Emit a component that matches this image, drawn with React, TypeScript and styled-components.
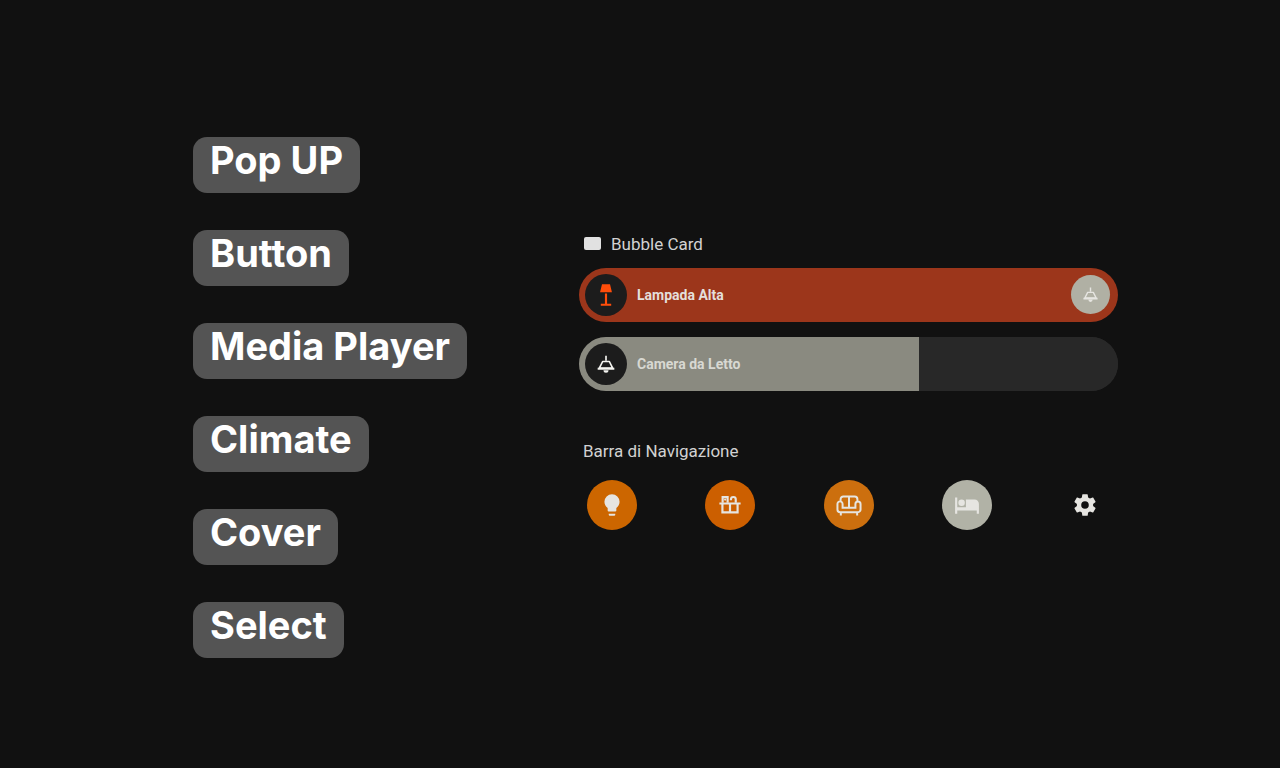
import React, { useState } from "react";
import styled, { createGlobalStyle } from "styled-components";

const GlobalStyle = createGlobalStyle`
  * { box-sizing: border-box; }
  body {
    margin: 0;
    background: #111111;
    color: #e1e1e1;
    font-family: Roboto, "Liberation Sans", sans-serif;
  }
`;

const Page = styled.main`
  min-height: 100vh;
  display: grid;
  grid-template-columns: 386px minmax(0, 1fr);
  align-items: center;
  padding: 0 162px 0 193px;
`;

const FeatureList = styled.nav`
  display: flex;
  flex-direction: column;
  align-items: flex-start;
  gap: 37px;
  padding-top: 27px;
`;

const Feature = styled.button`
  height: 56px;
  padding: 0 17px 10px;
  border: 0;
  border-radius: 14px;
  background: #545454;
  color: #ffffff;
  font: 700 38px/46px Inter, Roboto, sans-serif;
  white-space: nowrap;
  cursor: pointer;
`;

const Panel = styled.section`
  display: flex;
  flex-direction: column;
  padding-bottom: 5px;
`;

const Heading = styled.h2<{ $indent: number }>`
  display: flex;
  align-items: center;
  gap: 10px;
  margin: 0;
  padding-left: ${(p) => p.$indent}px;
  font-size: 17px;
  font-weight: 400;
  line-height: 20px;
  color: #d2d2d2;
`;

const CardGlyph = styled.span`
  width: 17px;
  height: 13px;
  border-radius: 2px;
  background: #e1e1e1;
`;

const Cards = styled.div`
  display: flex;
  flex-direction: column;
  gap: 15px;
  margin: 14px 0 50px;
`;

const Card = styled.div<{ $color: string }>`
  position: relative;
  display: flex;
  align-items: center;
  justify-content: space-between;
  height: 54px;
  padding: 0 8px 0 6px;
  border-radius: 27px;
  overflow: hidden;
  background: ${(p) => p.$color};
`;

const CardMain = styled.button`
  display: flex;
  flex: 1;
  align-items: center;
  gap: 10px;
  padding: 0;
  border: 0;
  background: none;
  color: #e4dfdb;
  font: 700 14px/20px Roboto, sans-serif;
  cursor: pointer;
`;

const SliderLabel = styled.label`
  position: relative;
  display: flex;
  align-items: center;
  gap: 10px;
  color: #d8d8d2;
  font: 700 14px/20px Roboto, sans-serif;
  pointer-events: none;
`;

const Slider = styled.input`
  position: absolute;
  inset: 0;
  width: 100%;
  height: 100%;
  margin: 0;
  appearance: none;
  cursor: pointer;

  &::-webkit-slider-thumb {
    appearance: none;
    width: 1px;
    height: 54px;
    background: transparent;
  }
`;

const IconDisc = styled.span<{ $color: string }>`
  display: grid;
  place-items: center;
  width: 42px;
  height: 42px;
  border-radius: 50%;
  background: #1c1c1c;
  color: ${(p) => p.$color};
`;

const RoundButton = styled.button<{ $size: number; $color: string }>`
  display: grid;
  place-items: center;
  width: ${(p) => p.$size}px;
  height: ${(p) => p.$size}px;
  padding: 0;
  border: 0;
  border-radius: 50%;
  background: ${(p) => p.$color};
  color: #e6e5e1;
  cursor: pointer;
`;

const NavBar = styled.nav`
  display: flex;
  justify-content: space-between;
  margin-top: 19px;
  padding: 0 8px;
`;

type IconProps = { size: number; children: React.ReactNode };

const Icon = ({ size, children }: IconProps) => (
  <svg width={size} height={size} viewBox="0 0 24 24" fill="currentColor" aria-hidden="true">
    {children}
  </svg>
);

const CeilingLight = ({ size }: { size: number }) => (
  <Icon size={size}>
    <path d="M11 2h2v6h-2z" />
    <path
      d="M8 9h8l4 8H4z"
      fill="none"
      stroke="currentColor"
      strokeWidth="2"
      strokeLinejoin="round"
    />
    <path d="M2 16.500h20v2.500H2zM9 19.500h6a3 3 0 0 1-6 0z" />
  </Icon>
);

const FloorLamp = () => (
  <Icon size={26}>
    <path d="M8.300 2h7.400l1.800 7.500h-11zM11 10.500h2v9.500h3.800v2H7.200v-2h3.800z" />
  </Icon>
);

const Bulb = () => (
  <Icon size={26}>
    <path d="M12 2A7 7 0 0 0 5 9C5 11.380 6.190 13.470 8 14.740V17A1 1 0 0 0 9 18H15A1 1 0 0 0 16 17V14.740C17.810 13.470 19 11.380 19 9A7 7 0 0 0 12 2M9 21A1 1 0 0 0 10 22H14A1 1 0 0 0 15 21V20H9V21Z" />
  </Icon>
);

const Kitchen = () => (
  <Icon size={26}>
    <g fill="none" stroke="currentColor" strokeWidth="2">
      <path d="M2.200 10.600h19.600M5 11v7.800h14V11M12 11v7.800" />
      <path d="M5.200 10V4.700h4.600V10" />
      <path d="M17.300 10V6.800a2.200 2.200 0 0 0-4.400 0v.7" />
    </g>
    <circle cx="7.500" cy="7" r="1" />
  </Icon>
);

const Sofa = () => (
  <Icon size={28}>
    <path
      d="M4.800 9V7a2.300 2.300 0 0 1 2.300-2.300h9.800A2.300 2.300 0 0 1 19.200 7v2M12 4.700v9.600M6.500 14.300h11v-3.200a2.200 2.200 0 1 1 4.400 0v4.700a2.400 2.400 0 0 1-2.400 2.400H4.500a2.400 2.400 0 0 1-2.400-2.400v-4.700a2.200 2.200 0 1 1 4.400 0zM5 18v3M19 18v3"
      fill="none"
      stroke="currentColor"
      strokeWidth="1.700"
    />
  </Icon>
);

const Bed = () => (
  <Icon size={26}>
    <path d="M19 7H11V14H3V5H1V20H3V17H21V20H23V11A4 4 0 0 0 19 7M7 13A3 3 0 0 0 10 10A3 3 0 0 0 7 7A3 3 0 0 0 4 10A3 3 0 0 0 7 13Z" />
  </Icon>
);

const Cog = () => (
  <Icon size={26}>
    <path d="M12 15.500A3.500 3.500 0 0 1 8.500 12A3.500 3.500 0 0 1 12 8.500A3.500 3.500 0 0 1 15.500 12A3.500 3.500 0 0 1 12 15.500M19.430 12.970C19.470 12.650 19.500 12.330 19.500 12C19.500 11.670 19.470 11.340 19.430 11L21.540 9.370C21.730 9.220 21.780 8.950 21.660 8.730L19.660 5.270C19.540 5.050 19.270 4.960 19.050 5.050L16.560 6.050C16.040 5.660 15.500 5.320 14.870 5.070L14.500 2.420C14.460 2.180 14.250 2 14 2H10C9.750 2 9.540 2.180 9.500 2.420L9.130 5.070C8.500 5.320 7.960 5.660 7.440 6.050L4.950 5.050C4.730 4.960 4.460 5.050 4.340 5.270L2.340 8.730C2.210 8.950 2.270 9.220 2.460 9.370L4.570 11C4.530 11.340 4.500 11.670 4.500 12C4.500 12.330 4.530 12.650 4.570 12.970L2.460 14.630C2.270 14.780 2.210 15.050 2.340 15.270L4.340 18.730C4.460 18.950 4.730 19.030 4.950 18.950L7.440 17.940C7.960 18.340 8.500 18.680 9.130 18.930L9.500 21.580C9.540 21.820 9.750 22 10 22H14C14.250 22 14.460 21.820 14.500 21.580L14.870 18.930C15.500 18.670 16.040 18.340 16.560 17.940L19.050 18.950C19.270 19.030 19.540 18.950 19.660 18.730L21.660 15.270C21.780 15.050 21.730 14.780 21.540 14.630L19.430 12.970Z" />
  </Icon>
);

const features = ["Pop UP", "Button", "Media Player", "Climate", "Cover", "Select"];

const rooms = [
  { name: "Luci", color: "#cc6600", icon: <Bulb /> },
  { name: "Cucina", color: "#cc5f00", icon: <Kitchen /> },
  { name: "Soggiorno", color: "#cc6f0e", icon: <Sofa /> },
  { name: "Camera", color: "#b1b2a6", icon: <Bed /> },
  { name: "Impostazioni", color: "transparent", icon: <Cog /> },
];

export default function App() {
  const [level, setLevel] = useState(63);

  return (
    <>
      <GlobalStyle />
      <Page>
        <FeatureList>
          {features.map((name) => (
            <Feature key={name} type="button">{name}</Feature>
          ))}
        </FeatureList>

        <Panel>
          <Heading $indent={5}>
            <CardGlyph />
            Bubble Card
          </Heading>
          <Cards>
            <Card $color="#9c361b">
              <CardMain type="button">
                <IconDisc $color="#ff4d0a"><FloorLamp /></IconDisc>
                Lampada Alta
              </CardMain>
              <RoundButton type="button" $size={39} $color="#b0b0a4" aria-label="Lampadario">
                <CeilingLight size={17} />
              </RoundButton>
            </Card>
            <Card $color="#282828">
              <Slider
                id="camera"
                type="range"
                min={0}
                max={100}
                value={level}
                onChange={(e) => setLevel(Number(e.target.value))}
                style={{ background: `linear-gradient(to right, #8a8a80 ${level}%, #282828 ${level}%)` }}
              />
              <SliderLabel htmlFor="camera">
                <IconDisc $color="#f4f4f0"><CeilingLight size={20} /></IconDisc>
                Camera da Letto
              </SliderLabel>
            </Card>
          </Cards>
          <Heading $indent={4}>Barra di Navigazione</Heading>
          <NavBar>
            {rooms.map((room) => (
              <RoundButton key={room.name} type="button" $size={50} $color={room.color} aria-label={room.name}>
                {room.icon}
              </RoundButton>
            ))}
          </NavBar>
        </Panel>
      </Page>
    </>
  );
}
